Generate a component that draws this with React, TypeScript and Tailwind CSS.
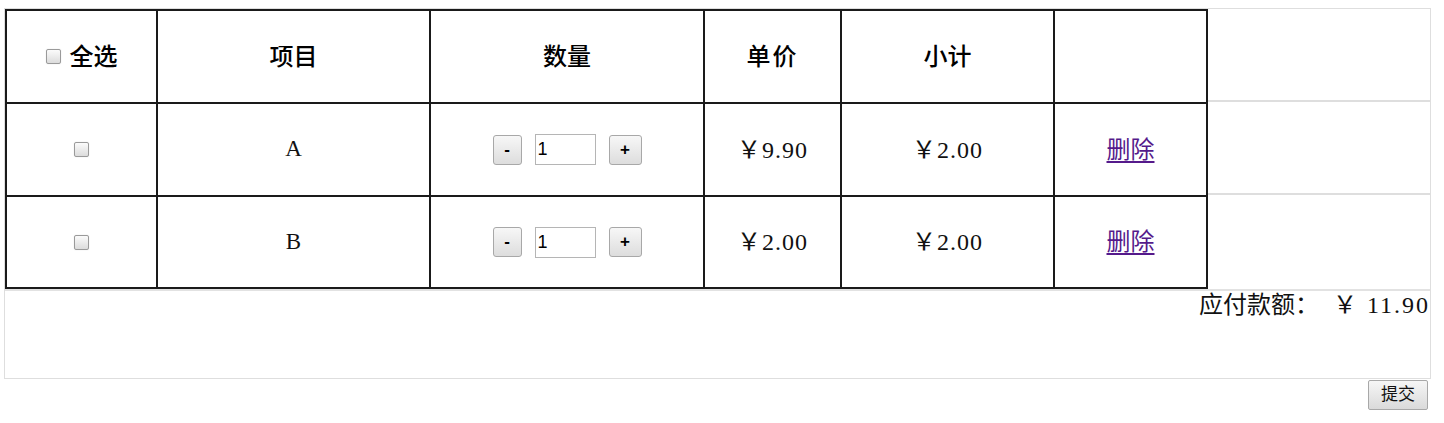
import React from "react";

const serif = { fontFamily: '"Liberation Serif", "Noto Sans CJK SC", serif' };
const sans = { fontFamily: '"Liberation Sans", "Noto Sans CJK SC", sans-serif' };

const cols = ["w-[151px]", "w-[273px]", "w-[274px]", "w-[137px]", "w-[213px]", "w-[155px]"];

const items = [
  { name: "A", price: "9.90", total: "2.00" },
  { name: "B", price: "2.00", total: "2.00" },
];

function Check() {
  return (
    <span className="inline-block h-[15px] w-[15px] rounded-[2px] border border-[#9a9a9a] bg-gradient-to-b from-[#fbfbfb] to-[#dcdcdc] shadow-[0_0_1px_#ccc]" />
  );
}

function Cell({ i, last, children }: { i: number; last?: boolean; children?: React.ReactNode }) {
  return (
    <div
      className={`${cols[i]} flex h-[93px] shrink-0 items-center justify-center border-l-2 border-t-2 border-[#1a1a1a] ${
        i === 5 ? "border-r-2" : ""
      } ${last ? "h-[94px] border-b-2" : ""}`}
    >
      {children}
    </div>
  );
}

function Filler({ last }: { last?: boolean }) {
  return <div className={`flex-1 ${last ? "h-[94px]" : "h-[93px] border-b-2 border-[#dedede]"}`} />;
}

function Money({ v }: { v: string }) {
  return (
    <span className="text-[24px] tracking-[1px] text-[#111]" style={serif}>
      ￥{v}
    </span>
  );
}

function SmallBtn({ label, w }: { label: string; w: string }) {
  return (
    <button
      className={`${w} flex h-[30px] items-center justify-center rounded-[3px] border border-[#a8a8a8] bg-gradient-to-b from-[#f7f7f7] to-[#dddddd] text-[17px] font-bold text-black`}
      style={sans}
    >
      {label}
    </button>
  );
}

export default function App() {
  return (
    <div className="bg-white pt-[8px] pl-[4px]" style={serif}>
      <div className="w-[1427px] border border-[#dedede]">
        <div className="flex">
          <Cell i={0}>
            <div className="flex items-center gap-[9px]">
              <Check />
              <span className="text-[24px] font-medium text-black">全选</span>
            </div>
          </Cell>
          <Cell i={1}>
            <span className="text-[24px] font-medium text-black">项目</span>
          </Cell>
          <Cell i={2}>
            <span className="text-[24px] font-medium text-black">数量</span>
          </Cell>
          <Cell i={3}>
            <span className="text-[24px] font-medium tracking-[2px] text-black">单价</span>
          </Cell>
          <Cell i={4}>
            <span className="text-[24px] font-medium text-black">小计</span>
          </Cell>
          <Cell i={5} />
          <Filler />
        </div>

        {items.map((it, idx) => {
          const last = idx === items.length - 1;
          return (
            <div key={it.name} className="flex">
              <Cell i={0} last={last}>
                <Check />
              </Cell>
              <Cell i={1} last={last}>
                <span className="text-[23px] text-[#111]">{it.name}</span>
              </Cell>
              <Cell i={2} last={last}>
                <div className="flex items-center gap-[13px]">
                  <SmallBtn label="-" w="w-[29px]" />
                  <input
                    readOnly
                    defaultValue="1"
                    className="h-[31px] w-[61px] border border-[#b5b5b5] bg-white pl-[2px] text-[18px] text-black outline-none"
                    style={sans}
                  />
                  <SmallBtn label="+" w="w-[33px]" />
                </div>
              </Cell>
              <Cell i={3} last={last}>
                <Money v={it.price} />
              </Cell>
              <Cell i={4} last={last}>
                <Money v={it.total} />
              </Cell>
              <Cell i={5} last={last}>
                <a href="#" className="text-[24px] text-[#551a8b] underline underline-offset-[3px]">
                  删除
                </a>
              </Cell>
              <Filler last={last} />
            </div>
          );
        })}

        <div className="h-[89px] border-t-2 border-[#e2e2e2]">
          <div className="flex justify-end pt-[1px] text-[24px] leading-[26px] text-[#111]">
            <span>应付款额：</span>
            <span className="ml-[14px] tracking-[2px]">￥ 11.90</span>
          </div>
        </div>
      </div>
      <div className="flex w-[1427px] justify-end pt-[1px]">
        <button
          className="mr-[3px] h-[30px] w-[60px] rounded-[2px] border border-[#a8a8a8] bg-gradient-to-b from-[#f6f6f6] to-[#dadada] text-[17px] text-[#111]"
          style={sans}
        >
          提交
        </button>
      </div>
    </div>
  );
}
